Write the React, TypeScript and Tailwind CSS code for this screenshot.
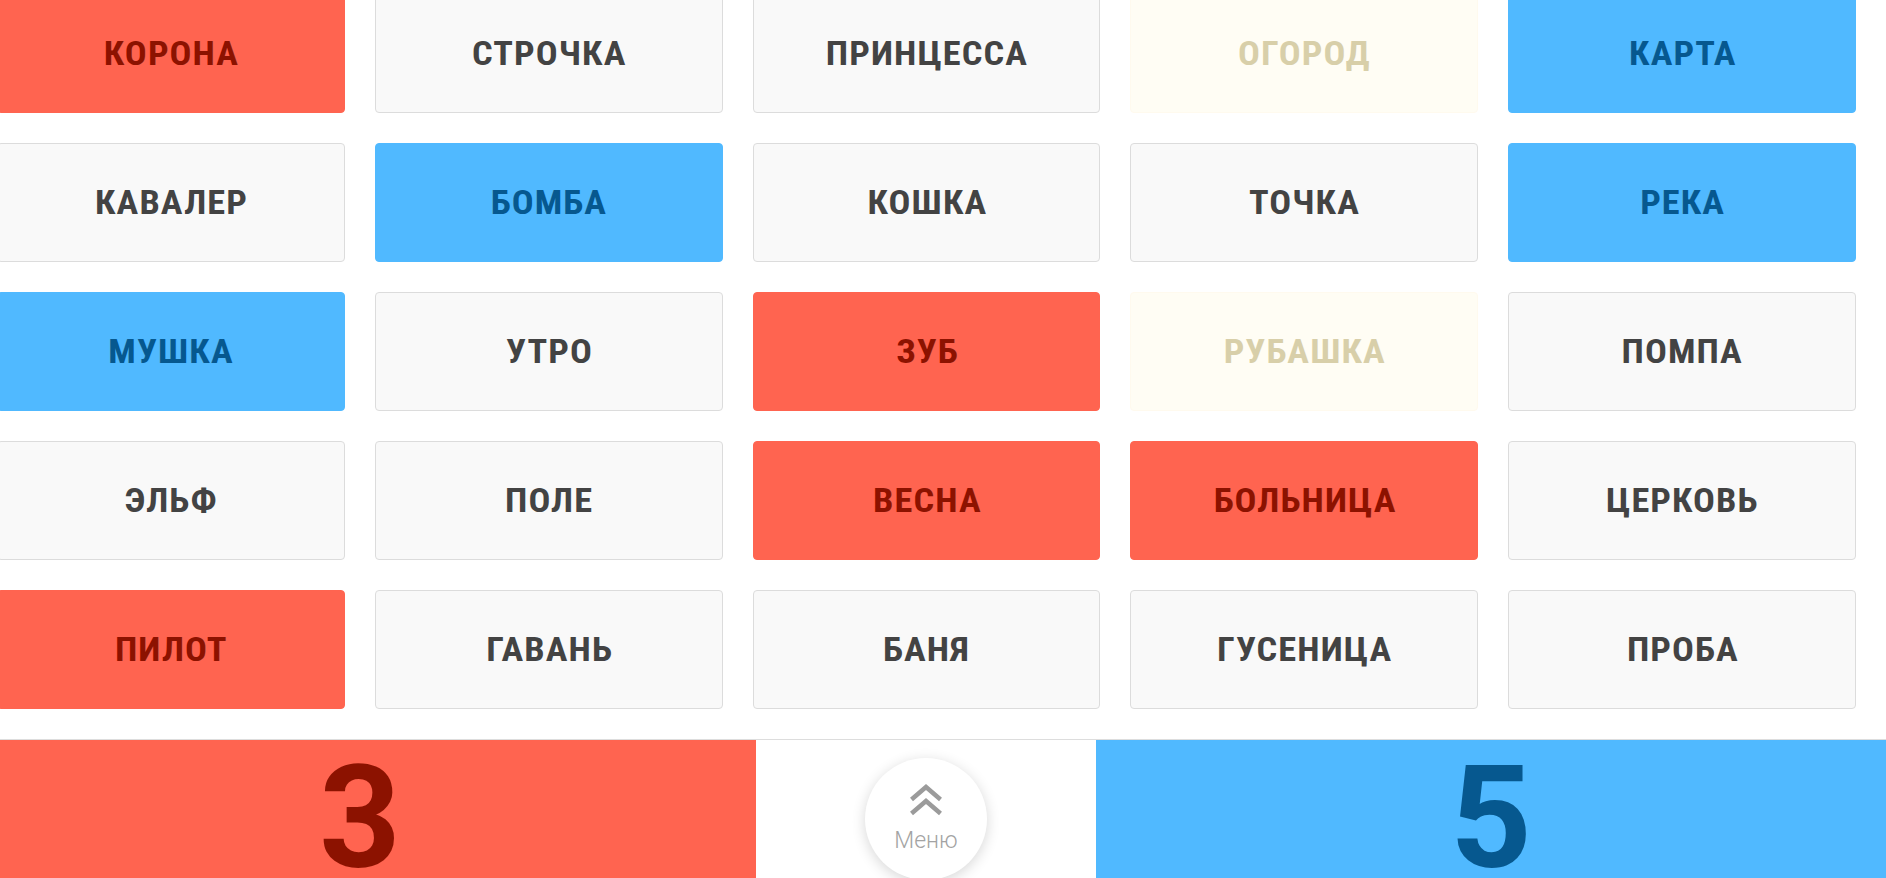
import React from "react";

type Kind = "red" | "blue" | "neutral" | "cream";

const words: [string, Kind][] = [
  ["КОРОНА", "red"],
  ["СТРОЧКА", "neutral"],
  ["ПРИНЦЕССА", "neutral"],
  ["ОГОРОД", "cream"],
  ["КАРТА", "blue"],
  ["КАВАЛЕР", "neutral"],
  ["БОМБА", "blue"],
  ["КОШКА", "neutral"],
  ["ТОЧКА", "neutral"],
  ["РЕКА", "blue"],
  ["МУШКА", "blue"],
  ["УТРО", "neutral"],
  ["ЗУБ", "red"],
  ["РУБАШКА", "cream"],
  ["ПОМПА", "neutral"],
  ["ЭЛЬФ", "neutral"],
  ["ПОЛЕ", "neutral"],
  ["ВЕСНА", "red"],
  ["БОЛЬНИЦА", "red"],
  ["ЦЕРКОВЬ", "neutral"],
  ["ПИЛОТ", "red"],
  ["ГАВАНЬ", "neutral"],
  ["БАНЯ", "neutral"],
  ["ГУСЕНИЦА", "neutral"],
  ["ПРОБА", "neutral"],
];

const cardStyles: Record<Kind, string> = {
  red: "bg-[#ff6450] border-[#ff6450] text-[#8c1200]",
  blue: "bg-[#50b9ff] border-[#50b9ff] text-[#06588f]",
  neutral: "bg-[#f9f9f9] border-[#dcdcdc] text-[#434343]",
  cream: "bg-[#fffdf4] border-[#fffaee] text-[#d8cfa9]",
};

const Card = ({ word, kind }: { word: string; kind: Kind }) => (
  <div
    className={`flex h-[118.5px] items-center justify-center rounded-[4px] border pl-[1px] ${cardStyles[kind]}`}
  >
    <span className="inline-block scale-x-[1.1] font-['Roboto',sans-serif] text-[33px] font-bold tracking-[1px] [font-stretch:75%]">
      {word}
    </span>
  </div>
);

const App = () => {
  return (
    <div className="h-screen w-full overflow-hidden bg-white font-['Roboto',sans-serif]">
      <div className="-mt-[6px] -ml-[3px] mr-[30px] grid grid-cols-5 gap-x-[30px] gap-y-[30.5px]">
        {words.map(([w, k]) => (
          <Card key={w} word={w} kind={k} />
        ))}
      </div>

      <div className="mt-[30.5px] flex h-[160px] border-t border-[#dddddd]">
        <div className="flex w-[756px] justify-center bg-[#ff6450] pr-[36px] pt-[8px]">
          <span className="text-[142px] font-bold leading-none text-[#8c1200]">3</span>
        </div>
        <div className="flex flex-1 justify-center bg-white pt-[18px]">
          <button className="flex h-[122px] w-[122px] flex-col items-center rounded-full bg-white pt-[26px] shadow-[0_3px_14px_rgba(0,0,0,0.16)]">
            <svg width="34" height="32" viewBox="0 0 34 32" fill="none">
              <polyline points="2.5,15.5 17,3 31.5,15.5" stroke="#9b9b9b" strokeWidth="4.5" />
              <polyline points="2.5,29.5 17,17 31.5,29.5" stroke="#9b9b9b" strokeWidth="4.5" />
            </svg>
            <span className="mt-[13px] text-[23px] font-light leading-none text-[#a3a3a3]">Меню</span>
          </button>
        </div>
        <div className="flex w-[790px] justify-center bg-[#50b9ff] pt-[8px]">
          <span className="text-[142px] font-bold leading-none text-[#06588f]">5</span>
        </div>
      </div>
    </div>
  );
};

export default App;
